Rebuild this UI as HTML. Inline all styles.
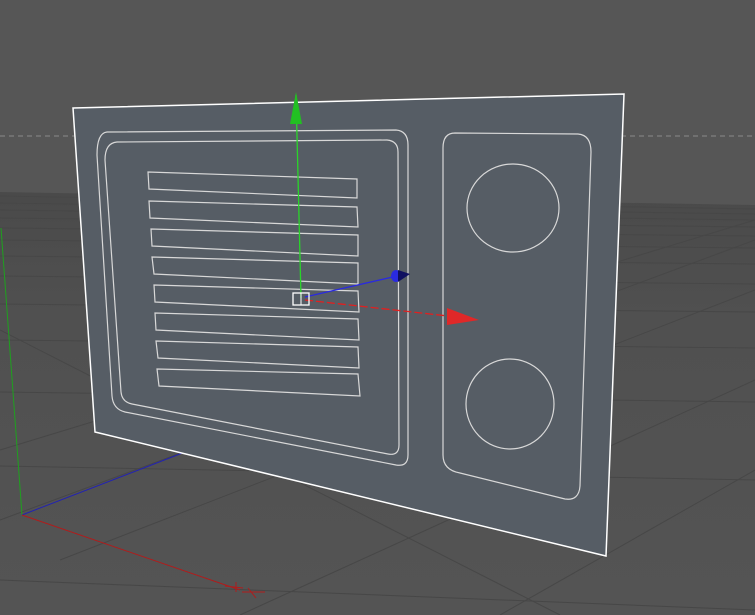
<!DOCTYPE html>
<html><head><style>html,body{margin:0;padding:0;background:#555;overflow:hidden}svg{display:block}</style></head>
<body>
<svg width="755" height="615" viewBox="0 0 755 615" xmlns="http://www.w3.org/2000/svg">
<defs><linearGradient id="fl" x1="0" y1="0" x2="0" y2="1"><stop offset="0" stop-color="#4a4a4a"/><stop offset="0.3" stop-color="#505050"/><stop offset="1" stop-color="#545454"/></linearGradient></defs>
<rect width="755" height="615" fill="#565656"/>
<polygon points="0,192 755,205 755,615 0,615" fill="url(#fl)"/>
<g stroke="#474747" stroke-width="1" fill="none">
<line x1="0" y1="196" x2="755" y2="209"/>
<line x1="0" y1="203" x2="755" y2="214"/>
<line x1="0" y1="210" x2="755" y2="220"/>
<line x1="0" y1="218" x2="755" y2="227"/>
<line x1="0" y1="228" x2="755" y2="236"/>
<line x1="0" y1="240" x2="755" y2="248"/>
<line x1="0" y1="256" x2="755" y2="264"/>
<line x1="0" y1="276" x2="755" y2="284"/>
<line x1="0" y1="304" x2="755" y2="312"/>
<line x1="0" y1="340" x2="755" y2="348"/>
<line x1="0" y1="392" x2="755" y2="402"/>
<line x1="0" y1="466" x2="755" y2="480"/>
<line x1="0" y1="580" x2="755" y2="610"/>
<line x1="0" y1="330" x2="560" y2="615"/>
<line x1="60" y1="560" x2="755" y2="290"/>
<line x1="0" y1="520" x2="755" y2="240"/>
<line x1="240" y1="615" x2="755" y2="380"/>
<line x1="500" y1="615" x2="755" y2="470"/>
<line x1="0" y1="450" x2="755" y2="220"/>
</g>
<line x1="0" y1="136" x2="755" y2="136" stroke="#8a8a8a" stroke-dasharray="5,4"/>
<line x1="22" y1="515" x2="1" y2="228" stroke="#1fa01f" stroke-width="1"/>
<line x1="22" y1="515" x2="185" y2="452" stroke="#2323b0"/>
<line x1="22" y1="515" x2="240" y2="590" stroke="#b01c1c"/>
<path d="M225,586 L243,588 M236,582 L236,592 M242,592 L265,592 M248,588 L256,598" stroke="#b01c1c" fill="none"/>
<polygon points="73,108 624,94 606,556 95,432" fill="#565d65" stroke="#fff" stroke-width="1.5"/>
<g stroke="#d8d8d8" fill="none" stroke-width="1.2">
<path d="M107,132 L396,130 Q408,131 408,145 L408,455 Q408,467 396,465 L125,412 Q113,409 112,396 L97,155 Q97,133 107,132 Z"/>
<path d="M117,142 L387,140 Q398,141 398,152 L399,445 Q399,456 388,454 L132,404 Q122,402 121,392 L105,160 Q105,143 117,142 Z"/>
<polygon points="148,172 357,179 357,198 149,189"/>
<polygon points="149,201 357,207 358,227 150,218"/>
<polygon points="151,229 358,235 358,256 152,246"/>
<polygon points="152,257 358,263 358,284 154,274"/>
<polygon points="154,285 358,291 359,312 155,302"/>
<polygon points="155,313 358,319 359,340 156,330"/>
<polygon points="156,341 358,347 359,368 158,358"/>
<polygon points="157,369 358,374 360,396 159,386"/>
<path d="M455,133 L578,134 Q591,135 591,152 L580,486 Q579,501 565,499 L460,473 Q443,470 443,455 L443,148 Q443,133 455,133 Z"/>
<ellipse cx="513" cy="208" rx="46" ry="44"/>
<ellipse cx="510" cy="404" rx="44" ry="45"/>
</g>
<line x1="301" y1="298" x2="296" y2="95" stroke="#2ad42a" stroke-width="1.3"/>
<polygon points="296,92 290,124 302,124" fill="#22c022"/>
<line x1="305" y1="297" x2="397" y2="276" stroke="#2a2ae0" stroke-width="1.3"/>
<ellipse cx="396" cy="276" rx="5" ry="6" fill="#2a2ae0"/>
<polygon points="398,270 410,274 398,282" fill="#101060"/>
<line x1="305" y1="300" x2="448" y2="316" stroke="#e02020" stroke-width="1.3" stroke-dasharray="8,3"/>
<polygon points="447,308 479,320 447,325" fill="#e02828"/>
<rect x="293" y="293" width="16" height="12" fill="none" stroke="#fff" stroke-width="1.3"/>
<line x1="301" y1="293" x2="301" y2="305" stroke="#fff"/>
</svg>
</body></html>
